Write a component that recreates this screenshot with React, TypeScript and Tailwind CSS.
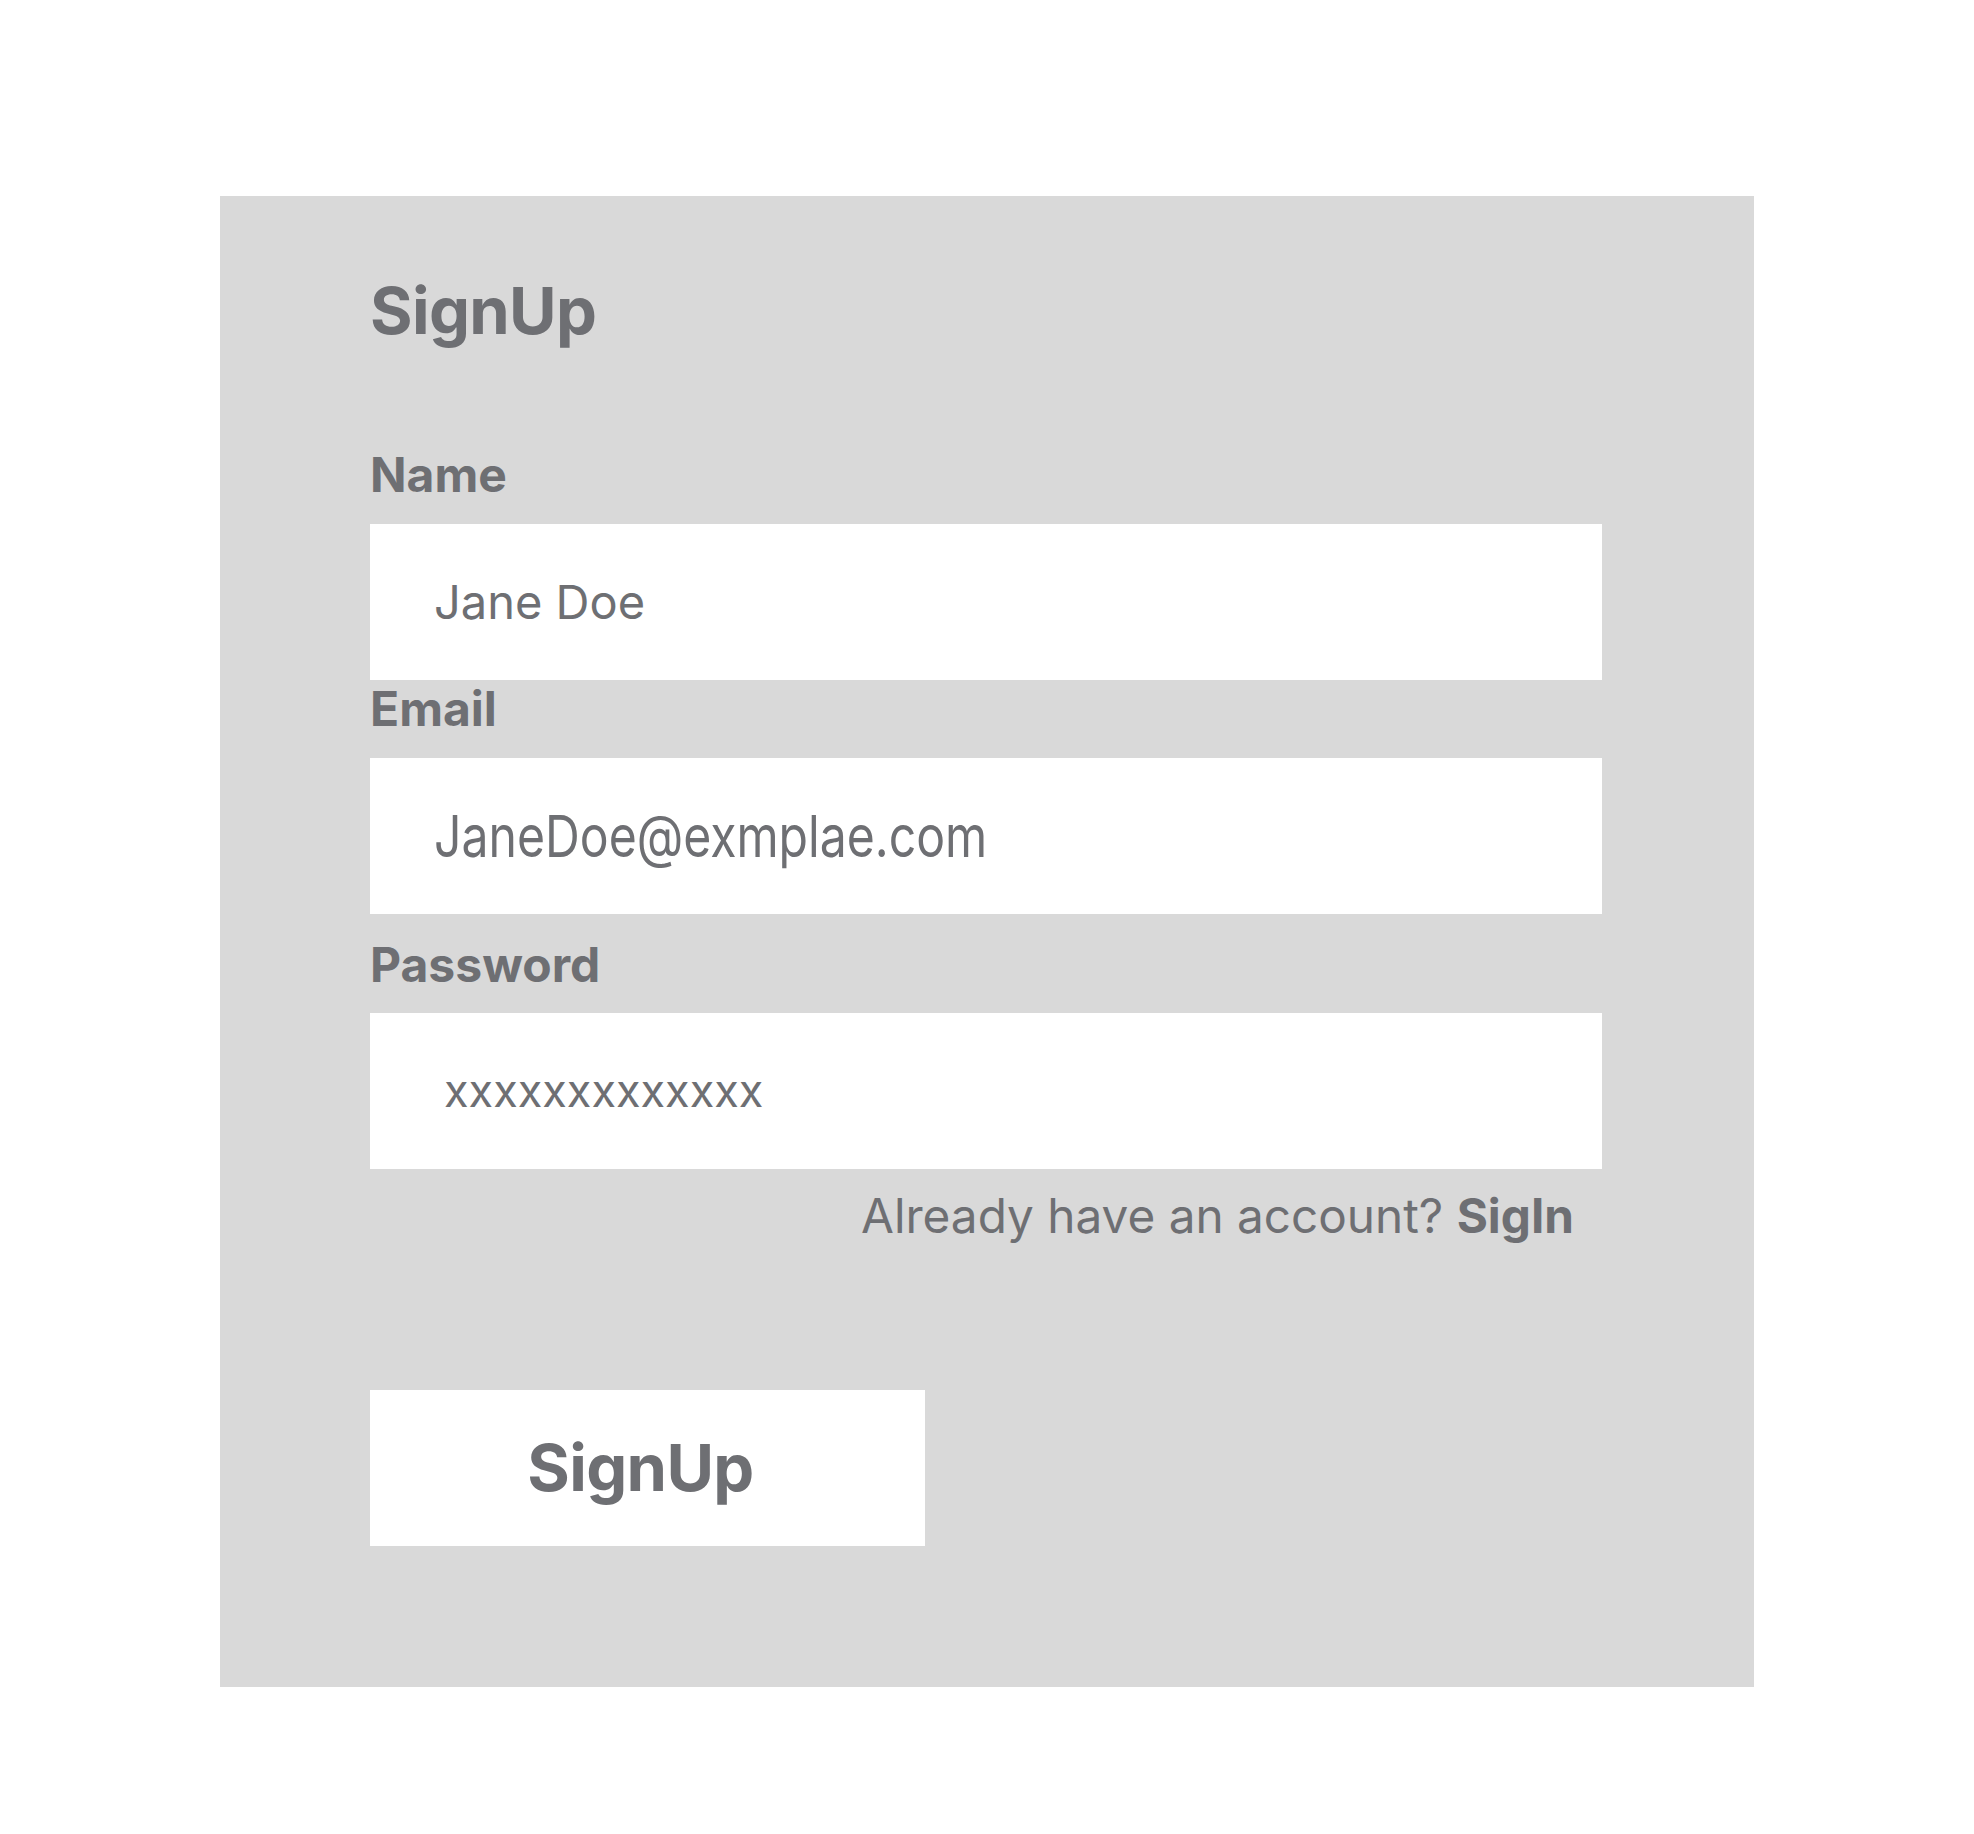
import React from "react";

const font = { fontFamily: "Inter, 'Noto Sans', sans-serif" };

export default function App() {
  return (
    <div className="min-h-[1834px] w-full bg-white pt-[196px] pl-[220px] text-[#6e6f73]" style={font}>
      <div className="flex h-[1491px] w-[1534px] flex-col bg-[#d9d9d9] pt-[82px] pl-[150px]">
        <h1 className="text-[65px] font-bold leading-none tracking-[-0.01em]">SignUp</h1>

        <label className="mt-[108px] text-[48px] font-bold leading-none">Name</label>
        <div className="mt-[25px] flex h-[156px] w-[1232px] items-center bg-white pl-[64px]">
          <span className="text-[47px] leading-normal">Jane Doe</span>
        </div>

        <label className="mt-[5px] text-[48px] font-bold leading-none">Email</label>
        <div className="mt-[25px] flex h-[156px] w-[1232px] items-center bg-white pl-[64px]">
          <span className="inline-block origin-left scale-x-[0.83] text-[58px] leading-normal">JaneDoe@exmplae.com</span>
        </div>

        <label className="mt-[27px] text-[48px] font-bold leading-none">Password</label>
        <div className="mt-[24px] flex h-[156px] w-[1232px] items-center bg-white pl-[74px]">
          <span className="text-[45px] leading-normal">xxxxxxxxxxxxx</span>
        </div>

        <div className="mt-[24px] flex w-[1232px] justify-end pr-[28px]">
          <p className="text-[47.7px] leading-none">
            Already have an account? <span className="font-bold">SigIn</span>
          </p>
        </div>

        <button className="mt-[149px] flex h-[156px] w-[555px] items-center justify-center bg-white pr-[14px]">
          <span className="text-[65px] font-bold leading-none tracking-[-0.01em] text-[#6e6f73]">SignUp</span>
        </button>
      </div>
    </div>
  );
}
